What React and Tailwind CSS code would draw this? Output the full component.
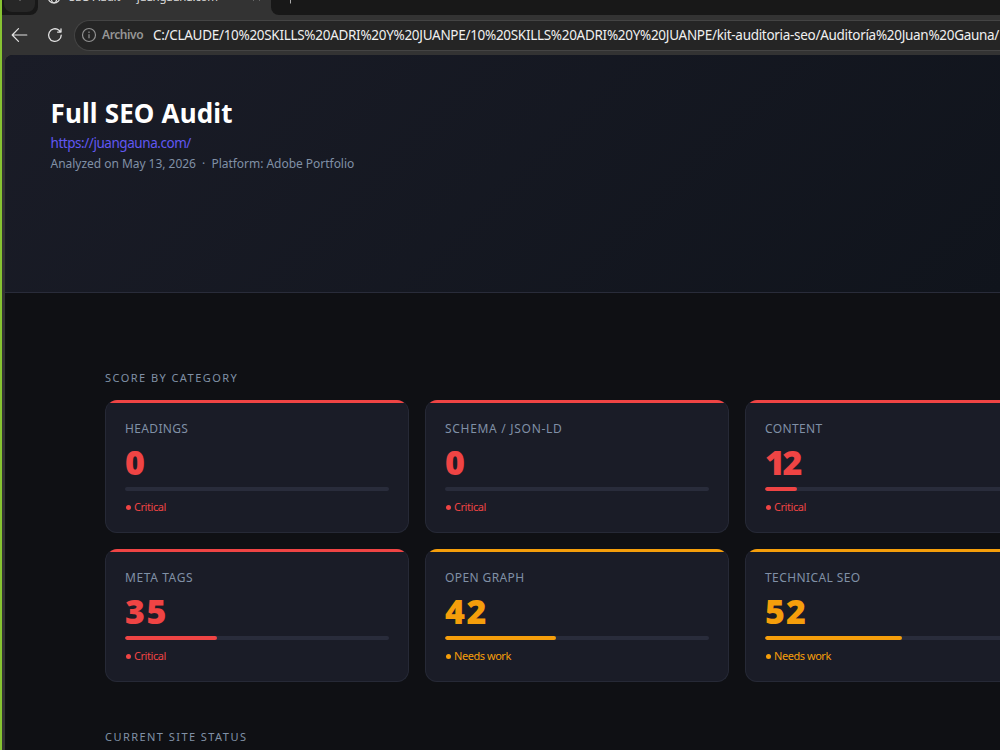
import React from 'react';

const categories = [
  { name: 'HEADINGS', score: 0, nameClass: 'tracking-[0.35px]', scoreClass: 'tracking-[1px]' },
  { name: 'SCHEMA / JSON-LD', score: 0, nameClass: 'tracking-[0.7px]', scoreClass: 'tracking-[1px]' },
  { name: 'CONTENT', score: 12, nameClass: 'tracking-[0.35px]', scoreClass: 'tracking-[-2.5px]' },
  { name: 'META TAGS', score: 35, nameClass: 'tracking-[0.6px]', scoreClass: 'tracking-[1.5px]' },
  { name: 'OPEN GRAPH', score: 42, nameClass: 'tracking-[0.4px]', scoreClass: 'tracking-[1.5px]' },
  { name: 'TECHNICAL SEO', score: 52, nameClass: 'tracking-[0.4px]', scoreClass: 'tracking-[1px]' },
];

const BrowserTabs = () => (
  <div className="flex h-[15px] shrink-0 overflow-hidden bg-[#333333]">
    {/* Tab actions button */}
    <div className="w-9 h-[15px] shrink-0 rounded-br-lg bg-[#181818]">
      <div className="ml-[2px] w-[31px] h-3 rounded-b-lg bg-[#272727] flex justify-center">
        <svg width="8" height="3" viewBox="0 0 8 3" fill="none" stroke="#777" strokeWidth="1">
          <path d="M2.5 -1 4 .7 5.5 -1" />
        </svg>
      </div>
    </div>
    {/* Active tab */}
    <div className="relative w-[233px] h-[15px] shrink-0 bg-[#333333]">
      <svg className="absolute left-[9px] -top-[10px]" width="14" height="14" viewBox="0 0 14 14" fill="none" stroke="#dedede" strokeWidth="1.2">
        <circle cx="7" cy="7" r="6" />
        <ellipse cx="7" cy="7" rx="2.8" ry="6" />
        <path d="M1.6 4.8h10.8M1.6 9.2h10.8" />
      </svg>
      <span className="absolute left-[31px] -top-[11px] text-[11.5px] leading-4 tracking-[-0.25px] text-[#dddddd] whitespace-nowrap">
        SEO Audit — juangauna.com
      </span>
      <svg className="absolute left-[214px] -top-[7px]" width="9" height="9" viewBox="0 0 9 9" stroke="#666" strokeWidth="1">
        <path d="M1 1l7 7M8 1 1 8" />
      </svg>
    </div>
    <div className="flex-1 h-[15px] rounded-bl-lg bg-[#181818]">
      <svg className="ml-[15px]" width="9" height="5" viewBox="0 0 9 5" stroke="#aaa" strokeWidth="1">
        <path d="M4.5 0v3.5" />
      </svg>
    </div>
  </div>
);

const AddressBar = () => (
  <div className="flex items-center h-10 shrink-0 bg-[#333333]">
    <svg className="ml-2 shrink-0" width="18" height="16" viewBox="0 0 18 16" fill="none" stroke="#e2e2e2" strokeWidth="1.2" strokeLinecap="round" strokeLinejoin="round">
      <path d="M8.5 1.7 2.2 8l6.3 6.3M2.2 8h14.6" />
    </svg>
    <svg className="ml-[19px] shrink-0" width="16" height="16" viewBox="0 0 16 16" fill="none" stroke="#e2e2e2" strokeWidth="1.3" strokeLinecap="round" strokeLinejoin="round">
      <path d="M14.2 8.2A6.3 6.3 0 1 1 12 3.3l1.8 1.6M14 1.8v3.3h-3.4" />
    </svg>
    <div className="ml-[11px] flex-1 min-w-0 h-[31px] flex items-center rounded-l-full border border-r-0 border-[#444444] bg-[#252525] pl-[6px] overflow-hidden">
      <svg className="shrink-0" width="16" height="16" viewBox="0 0 16 16" fill="none" stroke="#919191" strokeWidth="1.2">
        <circle cx="8" cy="8" r="6.5" />
        <path d="M8 7.2v4M8 4.6v1.3" />
      </svg>
      <span className="ml-[5px] w-[51px] shrink-0 text-xs font-semibold tracking-[-0.4px] text-[#969696]">Archivo</span>
      <span className="text-[13.5px] tracking-[-0.3px] text-[#f0f0f0] whitespace-nowrap">
        C:/CLAUDE/10%20SKILLS%20ADRI%20Y%20JUANPE/10%20SKILLS%20ADRI%20Y%20JUANPE/kit-auditoria-seo/Auditoría%20Juan%20Gauna/
      </span>
    </div>
  </div>
);

const ScoreCard = ({ name, score, nameClass, scoreClass }) => {
  const critical = score < 40;
  const text = critical ? 'text-[#ef4444]' : 'text-[#f59e0b]';
  const fill = critical ? 'bg-[#ef4444]' : 'bg-[#f59e0b]';

  return (
    <div className="h-[133px] rounded-xl border border-t-0 border-[#262936] bg-[#1a1c27] overflow-hidden">
      <div className={`h-[3px] ${fill}`} />
      <div className="px-[19px] pt-[17.5px]">
        <div className={`text-[12px] leading-4 text-[#8090a6] whitespace-nowrap ${nameClass}`}>{name}</div>
        <div className={`mt-[7.5px] h-9 text-[34px] leading-9 font-black ${text} ${scoreClass}`}>{score}</div>
        <div className="mt-[7px] h-1 rounded-full bg-[#292c3b] overflow-hidden">
          <div className={`h-full rounded-full ${fill}`} style={{ width: `${score}%` }} />
        </div>
        <div className={`mt-2 flex items-center text-[11px] leading-4 tracking-[-0.45px] ${text}`}>
          <span className={`ml-px mr-[3px] w-[5px] h-[5px] rounded-full ${fill}`} />
          {critical ? 'Critical' : 'Needs work'}
        </div>
      </div>
    </div>
  );
};

export default function App() {
  return (
    <div className="w-[1000px] h-[750px] overflow-hidden flex bg-[#333333] font-['Noto_Sans',sans-serif]">
      <div className="w-[2px] shrink-0 bg-[#87c332]" />
      <div className="flex-1 min-w-0 flex flex-col">
        <BrowserTabs />
        <AddressBar />

        <main className="ml-[3px] flex-1 min-h-0 overflow-hidden rounded-tl-lg bg-[#0f1014]">
          <header className="h-[238px] border-b border-[#292c3a] bg-linear-135 from-[#1a1c27] to-[#10141c] pl-[45.5px] pt-[40px]">
            <h1 className="text-[26px] leading-9 font-bold tracking-[0.15px] text-white">Full SEO Audit</h1>
            <div className="mt-[2px] text-[13.5px] leading-5 tracking-[-0.45px] text-[#6157f2]">https://juangauna.com/</div>
            <div className="pt-px text-[12px] leading-5 tracking-[-0.03px] text-[#8090a6] whitespace-pre">
              Analyzed on May 13, 2026&nbsp; ·&nbsp; Platform: Adobe Portfolio
            </div>
          </header>

          <section className="pl-[100px] pt-[77px]">
            <h2 className="text-[11px] leading-4 tracking-[1.45px] text-[#8090a6]">SCORE BY CATEGORY</h2>
            <div className="mt-[14px] grid grid-cols-[304px_304px_304px] gap-4">
              {categories.map((category) => (
                <ScoreCard key={category.name} {...category} />
              ))}
            </div>
            <h2 className="mt-[47px] text-[11px] leading-4 tracking-[1.45px] text-[#8090a6]">CURRENT SITE STATUS</h2>
          </section>
        </main>
      </div>
    </div>
  );
}
